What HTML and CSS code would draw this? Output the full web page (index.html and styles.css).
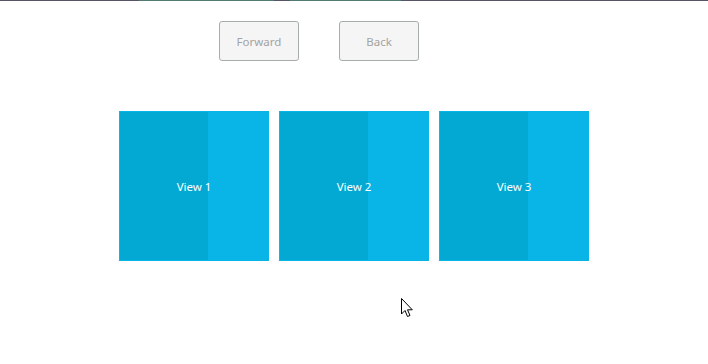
FILE: index.html
```html
<!DOCTYPE html>
<html>
<head>
<meta charset="utf-8">
<link rel="stylesheet" href="styles.css">
</head>
<body>
<div class="topbar">
  <div class="seg dark w139"></div>
  <div class="seg green w135"></div>
  <div class="seg dark w16"></div>
  <div class="seg green w111"></div>
  <div class="seg dark grow"></div>
</div>
<div class="buttons">
  <button class="btn">Forward</button>
  <button class="btn">Back</button>
</div>
<div class="views">
  <div class="view"><span class="label">View 1</span></div>
  <div class="view"><span class="label">View 2</span></div>
  <div class="view"><span class="label">View 3</span></div>
</div>
<svg class="cursor" width="12" height="20" viewBox="0 0 12 20">
  <path d="M0.5 0.5 L0.5 16 L4 12.5 L6.5 18.5 L9 17.5 L6.5 11.8 L11.3 11.8 Z" fill="#fff" stroke="#000" stroke-width="1" stroke-linejoin="miter"/>
</svg>
</body>
</html>
```
FILE: styles.css
```css
html, body {
  margin: 0;
  padding: 0;
  background: #ffffff;
  width: 708px;
  height: 364px;
  overflow: hidden;
  position: relative;
  font-family: "Noto Sans", "Open Sans", sans-serif;
}
.topbar {
  display: flex;
  height: 1px;
}
.seg { height: 1px; }
.dark { background: #575565; }
.green { background: #4f7b70; }
.w139 { width: 139px; }
.w135 { width: 135px; }
.w16 { width: 16px; }
.w111 { width: 111px; }
.grow { flex: 1; }
.buttons {
  display: flex;
  gap: 40px;
  padding: 20px 0 0 219px;
}
.btn {
  box-sizing: border-box;
  width: 80px;
  height: 40px;
  margin: 0;
  padding: 0;
  background: #f5f5f5;
  border: 1px solid #a7adad;
  border-radius: 3px;
  color: #a3a3a3;
  font-family: "Noto Sans", "Open Sans", sans-serif;
  font-size: 11.5px;
}
.views {
  display: flex;
  gap: 10px;
  padding: 50px 0 0 119px;
}
.view {
  box-sizing: border-box;
  width: 150px;
  height: 150px;
  display: flex;
  align-items: center;
  justify-content: center;
  background: linear-gradient(to right, #03a9d3 0, #03a9d3 88px, #08b5e6 88px);
  border: 1px solid #08b5e6;
  border-left-color: #0ab7e6;
}
.label {
  color: #ffffff;
  font-size: 11.5px;
}
.cursor {
  position: absolute;
  left: 401px;
  top: 298px;
}
```
